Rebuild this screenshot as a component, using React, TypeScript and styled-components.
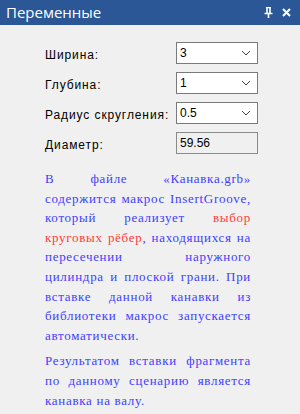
import React from "react";
import styled, { createGlobalStyle } from "styled-components";

const Global = createGlobalStyle`
  html, body { margin: 0; padding: 0; background: #f0f0f0; }
  body { width: 300px; height: 414px; overflow: hidden; }
`;

const Panel = styled.div`
  width: 300px;
  height: 414px;
  background: #f0f0f0;
  display: flex;
  flex-direction: column;
`;

const TitleBar = styled.div`
  height: 25px;
  background: #2b5797;
  display: flex;
  align-items: center;
  justify-content: space-between;
  padding: 0 9px 0 6px;
  box-sizing: border-box;
`;

const Title = styled.span`
  color: #ffffff;
  font-family: "Open Sans", "Liberation Sans", sans-serif;
  font-size: 15px;
  line-height: 25px;
`;

const Icons = styled.div`
  display: flex;
  align-items: center;
  gap: 9px;
`;

const Body = styled.div`
  padding: 17px 0 0 45px;
`;

const Form = styled.div`
  display: grid;
  grid-template-columns: 131px 82px;
  grid-auto-rows: 22px;
  row-gap: 8px;
  align-items: center;
`;

const Label = styled.span`
  font-family: "Liberation Sans", Arial, sans-serif;
  font-size: 12px;
  letter-spacing: 0.9px;
  color: #000;
  padding-top: 4px;
`;

const Field = styled.div<{ $readonly?: boolean }>`
  height: 22px;
  box-sizing: border-box;
  border: 1px solid ${(p) => (p.$readonly ? "#8a8a8a" : "#7a7a7a")};
  background: ${(p) => (p.$readonly ? "#f0f0f0" : "#ffffff")};
  display: flex;
  align-items: center;
  justify-content: space-between;
  padding: 0 6px 0 3px;
  font-family: "Liberation Sans", Arial, sans-serif;
  font-size: 12px;
  color: #000;
`;

const Text = styled.div`
  margin-top: 15px;
  width: 206px;
  font-family: "Liberation Serif", "Times New Roman", serif;
  font-size: 13px;
  line-height: 19.6px;
  letter-spacing: 0.7px;
  color: #4040ff;
`;

const Para = styled.div`
  margin: 0 0 6px 0;
`;

const Line = styled.span<{ $last?: boolean }>`
  display: block;
  white-space: nowrap;
  text-align: ${(p) => (p.$last ? "left" : "justify")};
  text-align-last: ${(p) => (p.$last ? "left" : "justify")};
`;

const Red = styled.span`
  color: #ff3b3b;
`;

const Chevron = () => (
  <svg width="10" height="6" viewBox="0 0 10 6">
    <path d="M1 1 L5 5 L9 1" fill="none" stroke="#444" strokeWidth="1" />
  </svg>
);

const Select = ({ value }: { value: string }) => (
  <Field>
    <span>{value}</span>
    <Chevron />
  </Field>
);

export default function App() {
  return (
    <>
      <Global />
      <Panel>
        <TitleBar>
          <Title>Переменные</Title>
          <Icons>
            <svg width="9" height="11" viewBox="0 0 9 11">
              <path d="M3 0 V6 M6 0 V6 M2 0.5 H7 M0.5 6.5 H8.5 M4.5 6.5 V11" stroke="#fff" strokeWidth="1.6" fill="none" />
            </svg>
            <svg width="9" height="9" viewBox="0 0 9 9">
              <path d="M1 1 L8 8 M8 1 L1 8" stroke="#fff" strokeWidth="2" fill="none" />
            </svg>
          </Icons>
        </TitleBar>
        <Body>
          <Form>
            <Label>Ширина:</Label>
            <Select value="3" />
            <Label>Глубина:</Label>
            <Select value="1" />
            <Label>Радиус скругления:</Label>
            <Select value="0.5" />
            <Label>Диаметр:</Label>
            <Field $readonly>
              <span>59.56</span>
            </Field>
          </Form>
          <Text>
            <Para>
              <Line>В файле «Канавка.grb»</Line>
              <Line>содержится макрос InsertGroove,</Line>
              <Line>
                который реализует <Red>выбор</Red>
              </Line>
              <Line>
                <Red>круговых рёбер</Red>, находящихся на
              </Line>
              <Line>пересечении наружного</Line>
              <Line>цилиндра и плоской грани. При</Line>
              <Line>вставке данной канавки из</Line>
              <Line>библиотеки макрос запускается</Line>
              <Line $last>автоматически.</Line>
            </Para>
            <Para>
              <Line>Результатом вставки фрагмента</Line>
              <Line>по данному сценарию является</Line>
              <Line $last>канавка на валу.</Line>
            </Para>
          </Text>
        </Body>
      </Panel>
    </>
  );
}
